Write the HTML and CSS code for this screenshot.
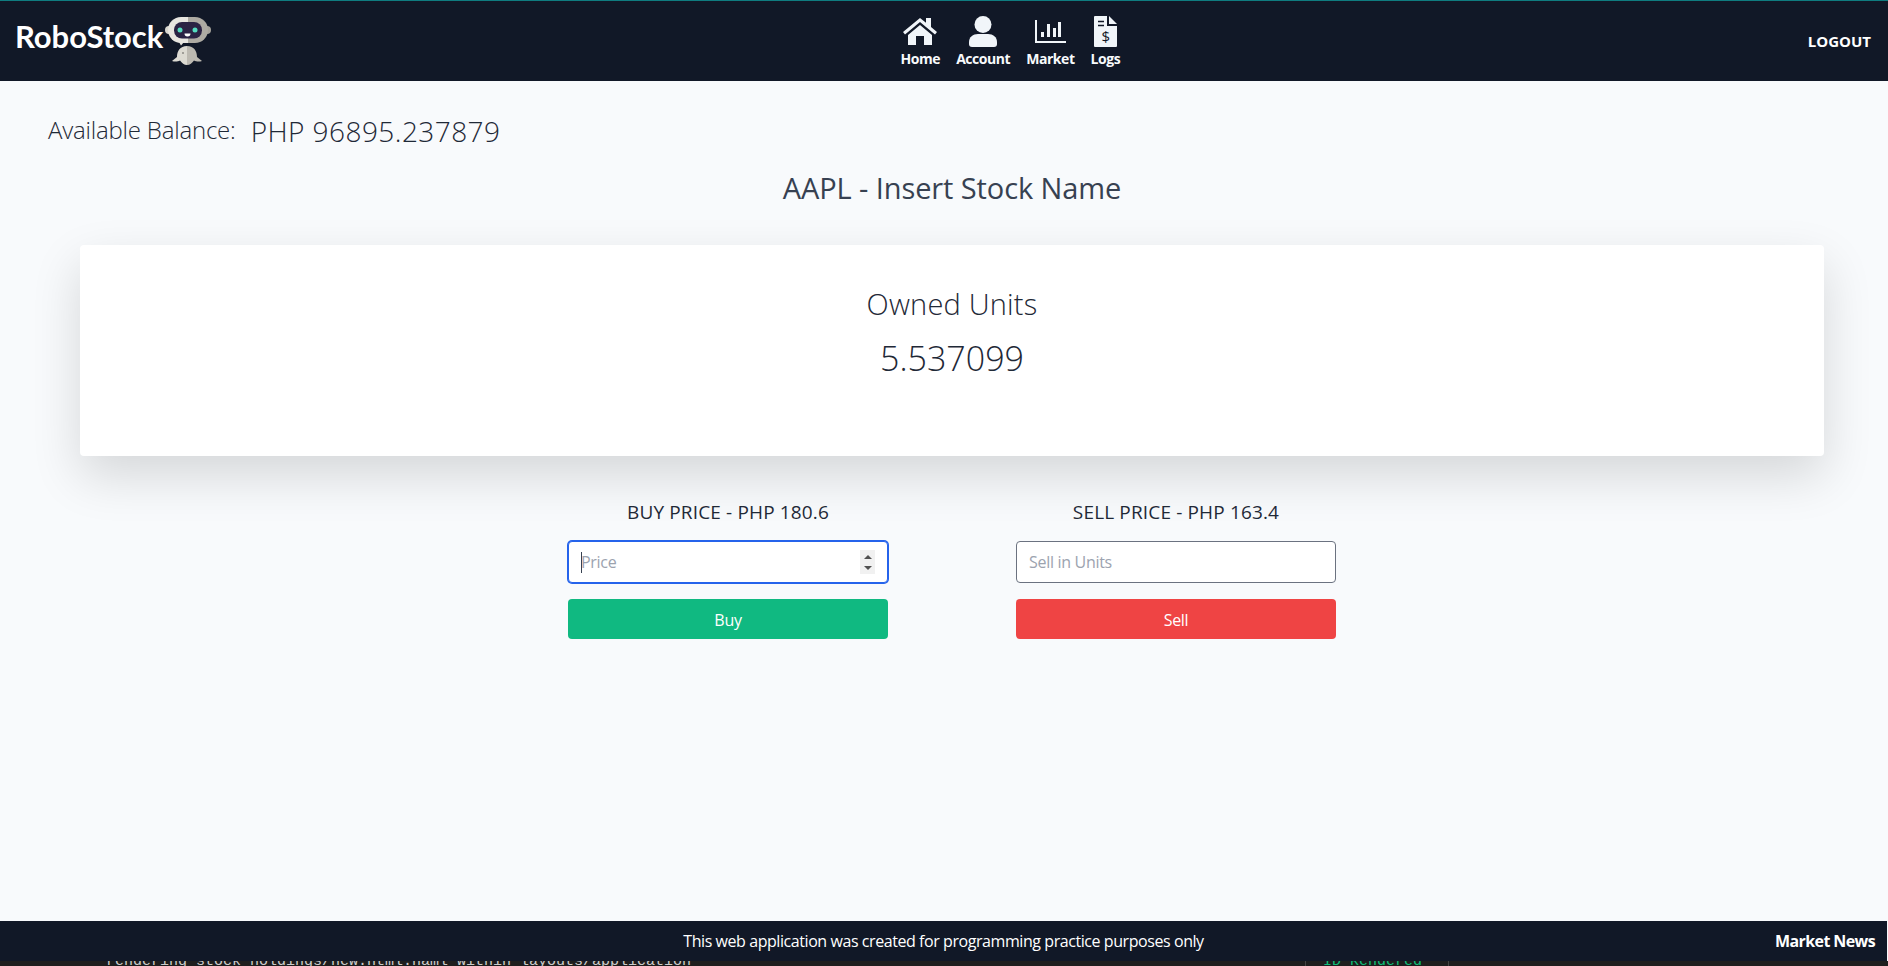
FILE: index.html
```html
<!DOCTYPE html>
<html lang="en">
<head>
    <meta charset="UTF-8">
    <meta name="viewport" content="width=device-width, initial-scale=1.0">
    <title>RoboStock</title>
    <link rel="stylesheet" href="styles.css">
</head>
<body>
    <nav class="navbar">
        <a class="logo" href="#">
            <span class="logo-text">RoboStock</span>
            <svg class="logo-robot" viewBox="0 0 46 48" width="46" height="48">
                <circle cx="4" cy="13" r="4" fill="#d8d6cf"/>
                <circle cx="42" cy="13" r="4" fill="#a5a29a"/>
                <path d="M23 0h-7A13 13 0 0 0 3 13a13 13 0 0 0 13 13h7z" fill="#e8e6e0"/>
                <path d="M23 0h7a13 13 0 0 1 13 13 13 13 0 0 1-13 13h-7z" fill="#aeaba3"/>
                <rect x="9" y="5" width="28" height="16.500" rx="8" fill="#2b2344"/>
                <circle cx="15" cy="13" r="2.500" fill="#55dcc0"/>
                <circle cx="30" cy="13" r="2.500" fill="#55dcc0"/>
                <path d="M19.500 16.500h6a3 3 0 0 1-6 0z" fill="#fff"/>
                <path d="M14 25h5l-3 3.500z" fill="#e8e6e0"/>
                <path d="M22 29c-7 0-10 5-10 11l-5 4c3 1 6 .5 8-.5 2 2.500 4 4.500 7 4.500z" fill="#dcdad2"/>
                <path d="M22 29c7 0 10 5 10 11l5 4c-3 1-6 .5-8-.5-2 2.500-4 4.500-7 4.500z" fill="#bcb9b1"/>
                <circle cx="18" cy="36" r="1" fill="#8c8a84"/>
            </svg>
        </a>
        <ul class="nav-links">
            <li><a href="#">
                <span class="nav-icon"><svg viewBox="0 0 34 27" width="34" height="27"><path d="M17 0 0 14l2 2.500L17 4l15 12.500 2-2.500-6-5V0h-5v4.800z" fill="#f1f5f9"/><path d="M5 17 17 7l12 10v10h-8v-9h-8v9H5z" fill="#f1f5f9"/></svg></span>
                Home</a></li>
            <li><a href="#">
                <span class="nav-icon"><svg viewBox="0 0 28 31" width="28" height="31"><circle cx="14" cy="8.500" r="8.500" fill="#f1f5f9"/><path d="M0 28v-2c0-5 4-8 9-8h10c5 0 9 3 9 8v2a3 3 0 0 1-3 3H3a3 3 0 0 1-3-3z" fill="#f1f5f9"/></svg></span>
                Account</a></li>
            <li><a href="#">
                <span class="nav-icon"><svg viewBox="0 0 31 23" width="31" height="23"><path d="M1 0v22h30" fill="none" stroke="#f1f5f9" stroke-width="2"/><path d="M6 12h3v5H6zM12 4h3v13h-3zM18 8h3v9h-3zM23 2h3v15h-3z" fill="#f1f5f9"/></svg></span>
                Market</a></li>
            <li><a href="#">
                <span class="nav-icon"><svg viewBox="0 0 23 31" width="23" height="31"><path d="M1 0h12v10h10v20a1 1 0 0 1-1 1H1a1 1 0 0 1-1-1V1a1 1 0 0 1 1-1z" fill="#f1f5f9"/><path d="M15 0l8 8h-8z" fill="#f1f5f9"/><path d="M4 5.500h6M4 9.500h6" stroke="#111827" stroke-width="1.500"/><text x="11.500" y="25.500" class="logs-dollar">$</text></svg></span>
                Logs</a></li>
        </ul>
        <a class="logout" href="#">LOGOUT</a>
    </nav>

    <main class="content">
        <div class="balance">
            <span class="balance-label">Available Balance:</span>
            <span class="balance-value">PHP 96895.237879</span>
        </div>
        <h1 class="stock-title">AAPL - Insert Stock Name</h1>

        <section class="card">
            <h2>Owned Units</h2>
            <p>5.537099</p>
        </section>

        <div class="trade">
            <form class="trade-form">
                <label for="buy_price">BUY PRICE - PHP 180.6</label>
                <div class="field focused">
                    <span class="caret"></span>
                    <span class="placeholder">Price</span>
                    <span class="spinner"><i class="up"></i><i class="down"></i></span>
                </div>
                <button type="button" class="btn btn-buy">Buy</button>
            </form>
            <form class="trade-form">
                <label for="sell_units">SELL PRICE - PHP 163.4</label>
                <input type="text" id="sell_units" class="field" placeholder="Sell in Units">
                <button type="button" class="btn btn-sell">Sell</button>
            </form>
        </div>
    </main>

    <footer class="footer">
        <span class="footer-note">This web application was created for programming practice purposes only</span>
        <a class="footer-news" href="#">Market News</a>
    </footer>
    <div class="terminal">
        <span class="terminal-log">rendering stock_holdings/new.html.haml within layouts/application</span>
        <span class="terminal-status">ID Rendered</span>
    </div>
</body>
</html>
```

FILE: styles.css
```css
* {
    box-sizing: border-box;
}
html, body {
    margin: 0;
    height: 100%;
    overflow: hidden;
}
body {
    font-family: "Open Sans", "Noto Sans", sans-serif;
    background-color: #f8fafc;
    color: #1f2937;
    display: flex;
    flex-direction: column;
}
a {
    color: inherit;
    text-decoration: none;
}
.navbar {
    height: 81px;
    flex-shrink: 0;
    background-color: #111827;
    border-top: 1px solid #0f7c80;
    color: #fff;
    display: flex;
    align-items: center;
    justify-content: space-between;
    padding: 0 17px 0 15px;
}
.logo {
    display: flex;
    align-items: center;
    gap: 2px;
    width: 198px;
    flex-shrink: 0;
}
.logo-text {
    font-family: "Lato", sans-serif;
    font-weight: 700;
    font-size: 31px;
    letter-spacing: -0.05px;
    margin-bottom: 10px;
}
.logo-robot {
    flex-shrink: 0;
}
.nav-links {
    list-style: none;
    display: flex;
    gap: 16px;
    margin: 2px 0 0;
    padding: 0;
}
.nav-links a {
    display: flex;
    flex-direction: column;
    align-items: center;
    font-size: 14px;
    line-height: 19px;
    font-weight: 700;
    color: #f8fafc;
    letter-spacing: -0.45px;
}
.nav-icon {
    height: 31px;
    margin-bottom: 2px;
    display: flex;
    align-items: center;
}
.logs-dollar {
    font-family: "Open Sans", sans-serif;
    font-size: 15px;
    font-weight: 400;
    text-anchor: middle;
    fill: #111827;
}
.logout {
    font-size: 15px;
    font-weight: 700;
}
.content {
    flex: 1;
    min-height: 0;
    padding: 0 64px 0 80px;
}
.balance {
    display: flex;
    align-items: flex-start;
    gap: 15px;
    margin: 31px 0 0 -32px;
}
.balance-label {
    font-size: 24px;
    font-weight: 300;
    letter-spacing: -0.2px;
    margin-top: 1px;
    color: #1f2937;
}
.balance-value {
    font-size: 28px;
    font-weight: 300;
    letter-spacing: 0.45px;
}
.stock-title {
    font-size: 29px;
    font-weight: 400;
    line-height: 40px;
    text-align: center;
    margin: 18px 0 0;
    letter-spacing: -0.1px;
    color: #374151;
}
.card {
    margin-top: 37px;
    height: 211px;
    background-color: #fff;
    border-radius: 4px;
    box-shadow: 0 20px 50px rgba(0, 0, 0, 0.14);
    text-align: center;
    padding-top: 39px;
}
.card h2 {
    margin: 0;
    font-size: 29px;
    font-weight: 300;
    letter-spacing: 0.2px;
    color: #1f2937;
}
.card p {
    margin: 12px 0 0;
    font-size: 34px;
    font-weight: 300;
}
.trade {
    display: flex;
    justify-content: center;
    gap: 128px;
    margin-top: 44px;
}
.trade-form {
    width: 320px;
    display: flex;
    flex-direction: column;
}
.trade-form label {
    font-size: 19px;
    text-align: center;
    letter-spacing: 0.15px;
    line-height: 24px;
    margin-bottom: 17px;
}
.field {
    height: 42px;
    width: 100%;
    border: 1px solid #6b7280;
    border-radius: 4px;
    background-color: #fff;
    padding: 0 12px;
    font-family: inherit;
    font-size: 16px;
    letter-spacing: -0.3px;
    margin-bottom: 16px;
}
.field::placeholder, .placeholder {
    color: #9ca3af;
    opacity: 1;
}
.focused {
    display: flex;
    align-items: center;
    border-color: #2563eb;
    box-shadow: 0 0 0 1px #2563eb;
}
.caret {
    width: 1px;
    height: 21px;
    margin-right: -1px;
    background-color: #374151;
}
.spinner {
    margin-left: auto;
    width: 15px;
    height: 24px;
    background-color: #f1f1f1;
    display: flex;
    flex-direction: column;
    align-items: center;
    justify-content: center;
    gap: 7px;
}
.spinner i {
    width: 0;
    height: 0;
    border-left: 4px solid transparent;
    border-right: 4px solid transparent;
}
.spinner .up {
    border-bottom: 4px solid #505050;
}
.spinner .down {
    border-top: 4px solid #505050;
}
.btn {
    height: 40px;
    border: none;
    border-radius: 4px;
    padding-top: 2px;
    color: #fff;
    font-family: inherit;
    font-size: 16px;
    letter-spacing: -0.3px;
    cursor: pointer;
}
.btn-buy {
    background-color: #10b981;
}
.btn-sell {
    background-color: #ef4444;
}
.footer {
    height: 40px;
    flex-shrink: 0;
    margin-right: 1px;
    background-color: #111827;
    color: #fff;
    display: flex;
    align-items: center;
    justify-content: center;
    position: relative;
    font-size: 16px;
}
.footer-note {
    letter-spacing: -0.43px;
}
.footer-news {
    position: absolute;
    right: 12px;
    font-weight: 700;
    letter-spacing: -0.6px;
}
.terminal {
    height: 5px;
    flex-shrink: 0;
    background-color: #1e1e1e;
    color: #cccccc;
    font-family: "Liberation Mono", monospace;
    font-size: 15px;
    line-height: 1px;
    overflow: hidden;
    display: flex;
    padding-left: 106px;
}
.terminal-status {
    margin-left: 614px;
    width: 144px;
    padding-left: 17px;
    border-left: 1px solid #444;
    border-right: 1px solid #444;
    color: #0dbc79;
}
```
